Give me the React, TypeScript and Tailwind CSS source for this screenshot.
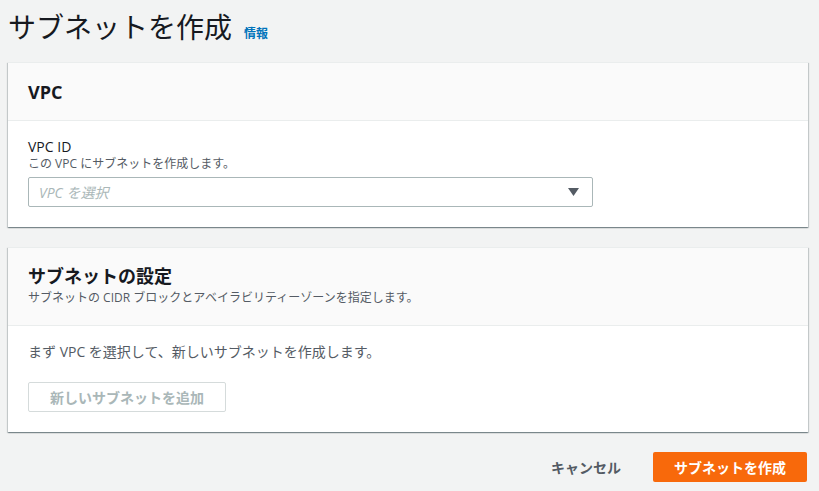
import React from "react";

const font = {
  fontFamily:
    '"Open Sans", "Noto Sans CJK JP", "Noto Sans", sans-serif',
};

const cardShadow =
  "shadow-[0_1px_1px_0_rgba(0,28,36,0.3),1px_1px_1px_0_rgba(0,28,36,0.15),-1px_1px_1px_0_rgba(0,28,36,0.15)]";

export default function App() {
  return (
    <div
      className="w-[819px] h-[491px] bg-[#f2f3f3] overflow-hidden"
      style={font}
    >
      <div className="ml-2 w-[800px]">
        <div className="pt-[10px] flex items-baseline">
          <h1 className="text-[28px] leading-[34px] font-normal text-[#16191f]">
            サブネットを作成
          </h1>
          <a className="ml-[12px] text-[12px] font-bold text-[#0073bb]">
            情報
          </a>
        </div>

        <div
          className={`mt-[18px] bg-white border-t border-[#eaeded] ${cardShadow}`}
        >
          <div className="bg-[#fafafa] border-b border-[#eaeded] px-5 pt-[18px] pb-[17px]">
            <h2 className="text-[18px] leading-[22px] font-bold text-[#16191f]">
              VPC
            </h2>
          </div>
          <div className="px-5 pt-[17px] pb-[20px]">
            <div className="text-[14px] leading-[18px] text-[#16191f]">
              VPC ID
            </div>
            <div className="text-[12px] leading-[16px] text-[#545b64]">
              この VPC にサブネットを作成します。
            </div>
            <div className="mt-[5px] w-[565px] h-[30px] border border-[#aab7b8] rounded-[2px] flex items-center justify-between pl-[10px] pr-[13px]">
              <span className="italic text-[14px] text-[#aab7b8]">
                VPC を選択
              </span>
              <svg width="11" height="8" viewBox="0 0 11 8">
                <polygon points="0,0 11,0 5.5,8" fill="#545b64" />
              </svg>
            </div>
          </div>
        </div>

        <div
          className={`mt-[20px] bg-white border-t border-[#eaeded] ${cardShadow}`}
        >
          <div className="bg-[#fafafa] border-b border-[#eaeded] px-5 pt-[17px] pb-[18px]">
            <h2 className="text-[18px] leading-[22px] font-bold text-[#16191f]">
              サブネットの設定
            </h2>
            <div className="mt-[2px] text-[12px] leading-[18px] text-[#545b64]">
              サブネットの CIDR ブロックとアベイラビリティーゾーンを指定します。
            </div>
          </div>
          <div className="px-5 pt-[16px] pb-[20px]">
            <div className="text-[14px] leading-[20px] text-[#545b64]">
              まず VPC を選択して、新しいサブネットを作成します。
            </div>
            <button className="mt-[20px] h-[30px] px-[21px] border border-[#d5dbdb] rounded-[2px] bg-white text-[14px] font-bold text-[#aab7b8]">
              新しいサブネットを追加
            </button>
          </div>
        </div>

        <div className="mt-[20px] flex justify-end items-center">
          <button className="h-[30px] px-[20px] text-[14px] font-bold text-[#545b64]">
            キャンセル
          </button>
          <button className="ml-[12px] mr-[1px] h-[30px] px-[21px] rounded-[2px] bg-[#f8690b] text-[14px] font-bold text-white">
            サブネットを作成
          </button>
        </div>
      </div>
    </div>
  );
}
